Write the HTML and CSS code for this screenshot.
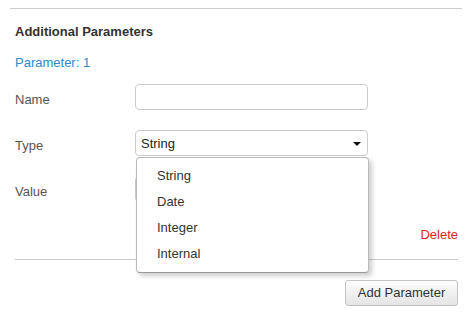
FILE: index.html
```html
<!DOCTYPE html>
<html lang="en">
<head>
  <meta charset="UTF-8">
  <title>Additional Parameters</title>
  <link rel="stylesheet" href="styles.css">
</head>
<body>
  <div class="panel">
    <div class="top-rule"></div>
    <div class="section">
      <h3>Additional Parameters</h3>
      <p class="param-title">Parameter: 1</p>

      <div class="row">
        <label>Name</label>
        <input type="text" class="field">
      </div>

      <div class="row">
        <label>Type</label>
        <div class="select-wrap">
          <div class="field select">
            <span>String</span>
            <span class="caret"></span>
          </div>
          <ul class="menu">
            <li>String</li>
            <li>Date</li>
            <li>Integer</li>
            <li>Internal</li>
          </ul>
        </div>
      </div>

      <div class="row">
        <label>Value</label>
        <input type="text" class="field">
      </div>

      <div class="delete-row"><a class="delete">Delete</a></div>

      <div class="rule"></div>

      <div class="actions">
        <button class="btn">Add Parameter</button>
      </div>
    </div>
  </div>
</body>
</html>
```

FILE: styles.css
```css
body {
  margin: 0;
  background: #fff;
  color: #333;
  font-family: "Liberation Sans", Arial, sans-serif;
  font-size: 13px;
  line-height: 18px;
}
.panel {
  padding: 8px 0 0 10px;
  width: 452px;
}
.top-rule {
  height: 1px;
  background: #ccc;
}
.section {
  padding: 0 4px 0 5px;
}
h3 {
  margin: 14px 0 0;
  font-size: 13px;
  line-height: 18px;
  color: #333;
}
.param-title {
  margin: 13px 0 12px;
  color: #2d8ad0;
}
.row {
  display: flex;
  align-items: flex-start;
  margin-bottom: 20px;
}
.row label {
  width: 120px;
  padding-top: 7px;
  color: #555;
}
.field {
  box-sizing: border-box;
  width: 233px;
  height: 26px;
  margin: 0;
  border: 1px solid #ccc;
  border-radius: 4px;
  background: #fff;
  font: inherit;
}
.select-wrap {
  position: relative;
}
.select {
  display: flex;
  align-items: center;
  justify-content: space-between;
  padding: 2px 6px 0 5px;
  color: #222;
}
.caret {
  width: 0;
  height: 0;
  border-left: 4px solid transparent;
  border-right: 4px solid transparent;
  border-top: 4px solid #111;
  margin-top: -1px;
}
.menu {
  position: absolute;
  top: 27px;
  left: 1px;
  z-index: 2;
  box-sizing: border-box;
  width: 233px;
  margin: 0;
  padding: 5px 0 5px 20px;
  list-style: none;
  background: #fff;
  border: 1px solid #bbb;
  border-bottom-color: #999;
  border-radius: 4px;
  box-shadow: 3px 3px 5px rgba(0, 0, 0, 0.2);
}
.menu li {
  line-height: 26px;
  color: #333;
}
.delete-row {
  display: flex;
  justify-content: flex-end;
  margin-top: 24px;
}
.delete {
  color: #d9261c;
}
.rule {
  height: 1px;
  background: #ccc;
  margin-top: 15px;
}
.actions {
  display: flex;
  justify-content: flex-end;
  margin-top: 20px;
}
.btn {
  width: 113px;
  height: 26px;
  padding: 0;
  border: 1px solid #c4c4c4;
  border-radius: 3px;
  background: linear-gradient(#fdfdfd, #e4e4e4);
  color: #333;
  font: inherit;
}
```
